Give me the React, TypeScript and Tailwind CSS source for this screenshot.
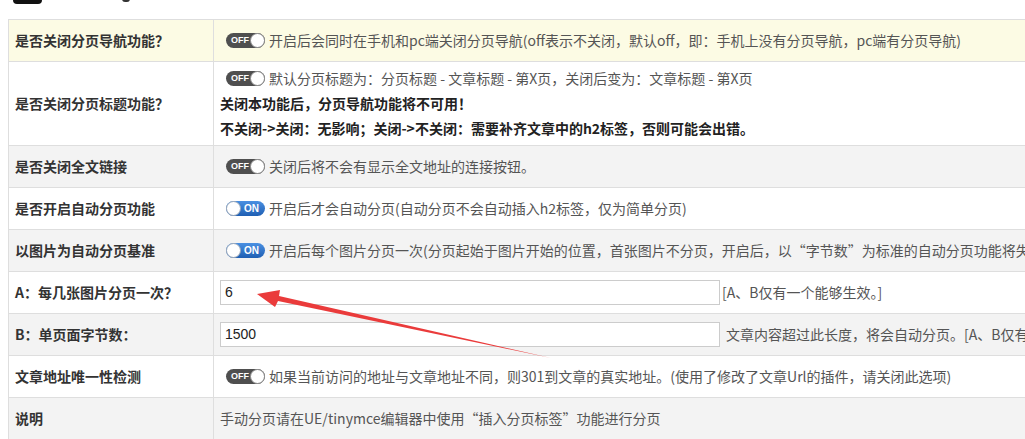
import React from "react";

const font = { fontFamily: '"Microsoft YaHei", "Noto Sans CJK SC", "Noto Sans", sans-serif' };

function Toggle({ on }: { on?: boolean }) {
	if (on) {
		return (
			<span className="relative inline-flex items-center justify-end w-[39px] h-[15px] rounded-full bg-gradient-to-b from-[#4a90e2] to-[#1f5fb3] align-middle ml-[6px] mr-[4px] pr-[6px] shrink-0">
				<span className="text-[10px] leading-none font-bold text-white" style={{ fontFamily: '"Liberation Sans", sans-serif' }}>ON</span>
				<span className="absolute left-0 top-0 w-[15px] h-[15px] rounded-full bg-white border border-[#9aa7b8]" />
			</span>
		);
	}
	return (
		<span className="relative inline-flex items-center w-[39px] h-[15px] rounded-full bg-[#4f4f4f] align-middle ml-[6px] mr-[4px] pl-[5px] shrink-0">
			<span className="text-[9px] leading-none font-bold text-white" style={{ fontFamily: '"Liberation Sans", sans-serif' }}>OFF</span>
			<span className="absolute right-0 top-0 w-[15px] h-[15px] rounded-full bg-white border border-[#8a8a8a]" />
		</span>
	);
}

function Row({ label, bg, children }: { label: string; bg: string; children: React.ReactNode }) {
	return (
		<div className={`flex border-b border-[#dedede] h-[42px] ${bg}`}>
			<div className="w-[205px] shrink-0 flex items-center pl-[6px] border-r border-[#dedede] text-[14px] font-bold text-[#333]">
				{label}
			</div>
			<div className="flex-1 flex items-center pl-[6px] text-[14px] text-[#555] whitespace-nowrap overflow-hidden">
				{children}
			</div>
		</div>
	);
}

function Field({ value }: { value: string }) {
	return (
		<div className="w-[500px] h-[25px] shrink-0 border border-[#cccccc] bg-white flex items-center pl-[4px] mr-[2px] text-[14px] text-[#222]" style={{ fontFamily: '"Liberation Sans", Arial, sans-serif' }}>
			{value}
		</div>
	);
}

export default function App() {
	return (
		<div className="relative w-[1025px] h-[439px] overflow-hidden bg-white" style={font}>
			<div className="h-[19px] relative">
				<div className="absolute left-[13px] top-[-6px] w-[29px] h-[10px] rounded-[4px] bg-[#111]" />
				<div className="absolute left-[122px] top-[-4px] w-[8px] h-[6px] rounded-full bg-[#333]" />
			</div>
			<div className="ml-[8px] w-[1130px] border-l border-t border-[#dedede]">
				<Row label="是否关闭分页导航功能？" bg="bg-[#fcfbe4]">
					<Toggle />开启后会同时在手机和pc端关闭分页导航(off表示不关闭，默认off，即：手机上没有分页导航，pc端有分页导航)
				</Row>
				<div className="flex border-b border-[#dedede] bg-white h-[84px]">
					<div className="w-[205px] shrink-0 flex items-center pl-[6px] border-r border-[#dedede] text-[14px] font-bold text-[#333]">
						是否关闭分页标题功能？
					</div>
					<div className="flex-1 flex flex-col pt-[4px] pl-[6px] leading-[25px] text-[14px] text-[#555] whitespace-nowrap">
						<div className="flex items-center"><Toggle />默认分页标题为：分页标题 - 文章标题 - 第X页，关闭后变为：文章标题 - 第X页</div>
						<div className="font-bold text-[#222]">关闭本功能后，分页导航功能将不可用！</div>
						<div className="font-bold text-[#222]">不关闭-&gt;关闭：无影响；关闭-&gt;不关闭：需要补齐文章中的h2标签，否则可能会出错。</div>
					</div>
				</div>
				<Row label="是否关闭全文链接" bg="bg-[#f3f3f3]">
					<Toggle />关闭后将不会有显示全文地址的连接按钮。
				</Row>
				<Row label="是否开启自动分页功能" bg="bg-white">
					<Toggle on />开启后才会自动分页(自动分页不会自动插入h2标签，仅为简单分页)
				</Row>
				<Row label="以图片为自动分页基准" bg="bg-[#f3f3f3]">
					<Toggle on />开启后每个图片分页一次(分页起始于图片开始的位置，首张图片不分页，开启后，以“字节数”为标准的自动分页功能将失效)
				</Row>
				<Row label="A：每几张图片分页一次？" bg="bg-white">
					<Field value="6" />[A、B仅有一个能够生效。]
				</Row>
				<Row label="B：单页面字节数：" bg="bg-[#f3f3f3]">
					<Field value="1500" /><span className="pl-[4px]">文章内容超过此长度，将会自动分页。[A、B仅有一个能够生效。]</span>
				</Row>
				<Row label="文章地址唯一性检测" bg="bg-white">
					<Toggle />如果当前访问的地址与文章地址不同，则301到文章的真实地址。(使用了修改了文章Url的插件，请关闭此选项)
				</Row>
				<Row label="说明" bg="bg-[#f3f3f3]">
					手动分页请在UE/tinymce编辑器中使用“插入分页标签”功能进行分页
				</Row>
			</div>
			<svg className="absolute left-0 top-0 pointer-events-none" width="1025" height="439">
				<polygon points="257,294 280,290 279,296 551,358 278,301 275,307" fill="#ea3b3b" />
			</svg>
		</div>
	);
}
